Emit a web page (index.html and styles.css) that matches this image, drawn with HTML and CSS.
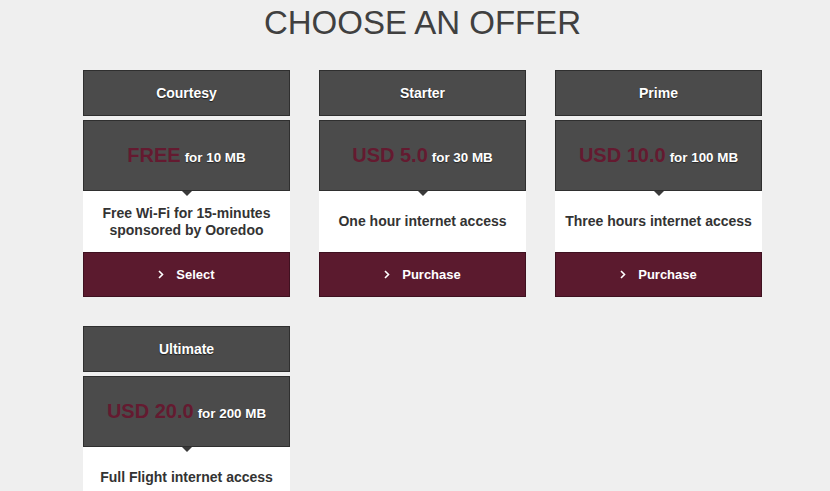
FILE: index.html
```html
<!DOCTYPE html>
<html lang="en">
<head>
<meta charset="utf-8">
<title>Choose an offer</title>
<link rel="stylesheet" href="styles.css">
</head>
<body>
<div class="page">
  <h1 class="title">CHOOSE AN OFFER</h1>
  <div class="offers">
    <div class="card">
      <div class="card-head">Courtesy</div>
      <div class="card-price"><span class="amount">FREE</span><span class="volume">for 10 MB</span></div>
      <div class="card-desc">Free Wi-Fi for 15-minutes<br>sponsored by Ooredoo</div>
      <div class="card-btn"><svg class="chev" width="6" height="9" viewBox="0 0 6 9"><polyline points="1,1 4.5,4.5 1,8" fill="none" stroke="#fff" stroke-width="1.6"/></svg>Select</div>
    </div>
    <div class="card">
      <div class="card-head">Starter</div>
      <div class="card-price"><span class="amount">USD 5.0</span><span class="volume">for 30 MB</span></div>
      <div class="card-desc">One hour internet access</div>
      <div class="card-btn"><svg class="chev" width="6" height="9" viewBox="0 0 6 9"><polyline points="1,1 4.5,4.5 1,8" fill="none" stroke="#fff" stroke-width="1.6"/></svg>Purchase</div>
    </div>
    <div class="card">
      <div class="card-head">Prime</div>
      <div class="card-price"><span class="amount">USD 10.0</span><span class="volume">for 100 MB</span></div>
      <div class="card-desc">Three hours internet access</div>
      <div class="card-btn"><svg class="chev" width="6" height="9" viewBox="0 0 6 9"><polyline points="1,1 4.5,4.5 1,8" fill="none" stroke="#fff" stroke-width="1.6"/></svg>Purchase</div>
    </div>
    <div class="card">
      <div class="card-head">Ultimate</div>
      <div class="card-price"><span class="amount">USD 20.0</span><span class="volume">for 200 MB</span></div>
      <div class="card-desc">Full Flight internet access</div>
      <div class="card-btn"><svg class="chev" width="6" height="9" viewBox="0 0 6 9"><polyline points="1,1 4.5,4.5 1,8" fill="none" stroke="#fff" stroke-width="1.6"/></svg>Purchase</div>
    </div>
  </div>
</div>
</body>
</html>
```
FILE: styles.css
```css
html, body {
  margin: 0;
  padding: 0;
  background: #efefef;
  font-family: "Liberation Sans", Arial, sans-serif;
}
.page {
  width: 679px;
  padding-left: 83px;
}
.title {
  margin: 4px 0 0;
  font-size: 33px;
  line-height: 38px;
  font-weight: normal;
  color: #404040;
  text-align: center;
}
.offers {
  margin-top: 28px;
  display: grid;
  grid-template-columns: repeat(3, 207px);
  column-gap: 29px;
  row-gap: 29px;
}
.card {
  display: flex;
  flex-direction: column;
}
.card-head {
  height: 46px;
  box-sizing: border-box;
  background: #4b4b4b;
  border: 1px solid #2f2f2f;
  display: flex;
  align-items: center;
  justify-content: center;
  color: #fff;
  font-weight: bold;
  font-size: 14px;
  text-shadow: 0 1px 1px rgba(0,0,0,0.6);
  margin-bottom: 4px;
}
.card-price {
  position: relative;
  height: 71px;
  box-sizing: border-box;
  background: #4b4b4b;
  border: 1px solid #2f2f2f;
  display: flex;
  align-items: baseline;
  justify-content: center;
  padding-top: 23px;
}
.card-price::after {
  content: "";
  position: absolute;
  left: 50%;
  bottom: -6px;
  margin-left: -5px;
  border-left: 5px solid transparent;
  border-right: 5px solid transparent;
  border-top: 5px solid #3a3a3a;
}
.amount {
  color: #641a30;
  font-weight: bold;
  font-size: 20px;
  margin-right: 4px;
}
.volume {
  color: #fff;
  font-weight: bold;
  font-size: 13.4px;
  text-shadow: 0 1px 1px rgba(0,0,0,0.5);
}
.card-desc {
  height: 61px;
  background: #fff;
  display: flex;
  align-items: center;
  justify-content: center;
  text-align: center;
  color: #333;
  font-weight: bold;
  font-size: 14px;
  line-height: 17px;
}
.card-btn {
  height: 45px;
  box-sizing: border-box;
  background: #5b1a2e;
  border: 1px solid #3f1120;
  display: flex;
  align-items: center;
  justify-content: center;
  color: #fff;
  font-weight: bold;
  font-size: 13px;
}
.chev {
  margin-right: 12px;
}
```
